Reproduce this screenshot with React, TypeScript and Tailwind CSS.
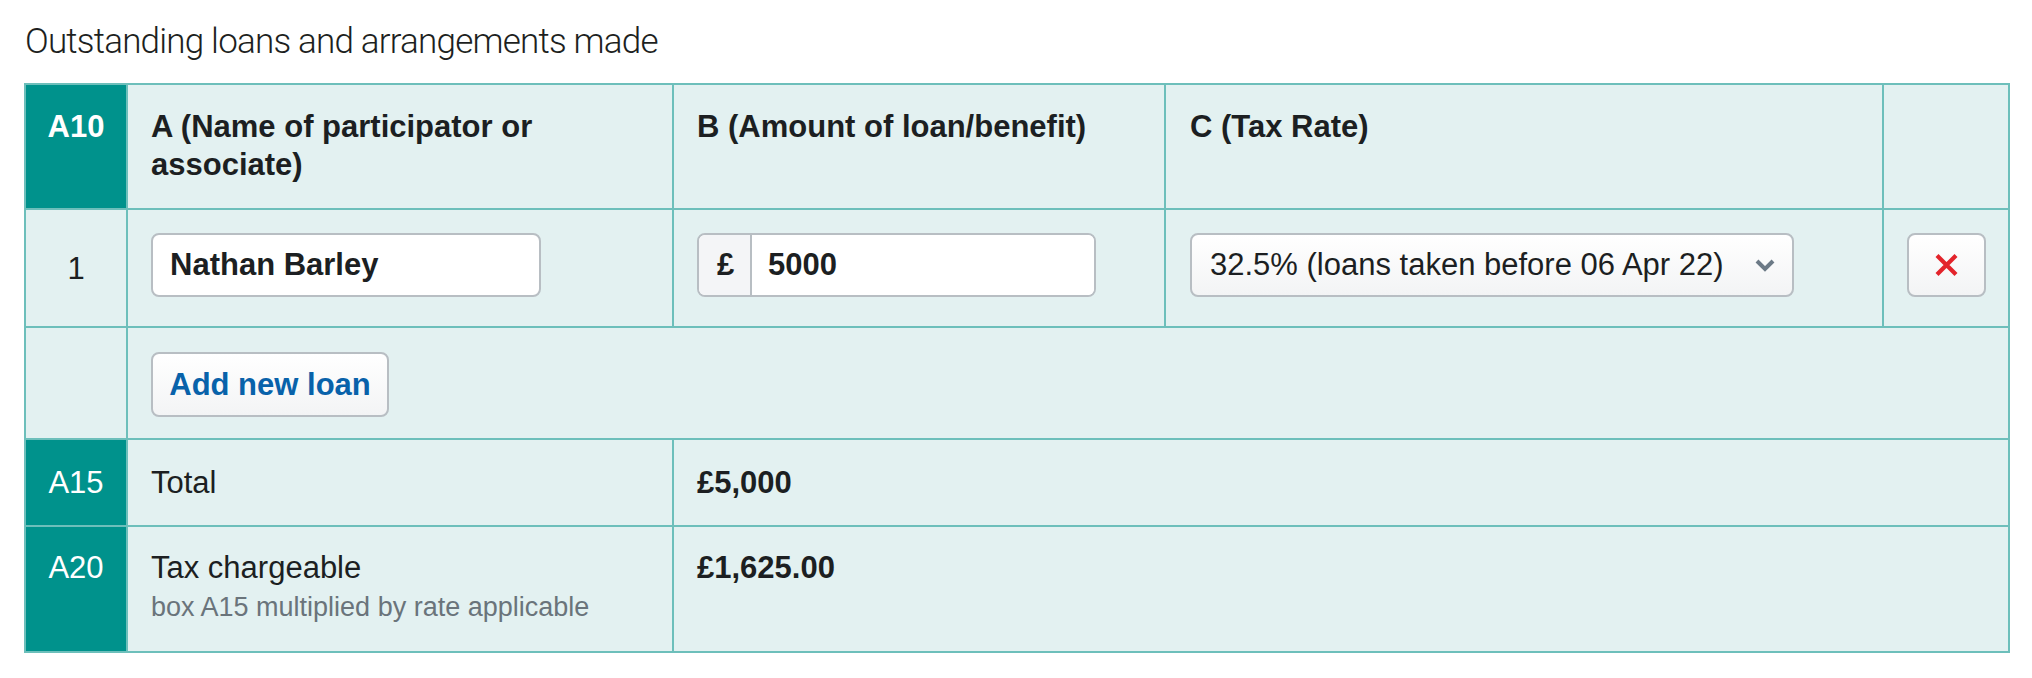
import React from "react";

const SANS = "font-['Liberation_Sans','Arial',sans-serif]";

function XIcon() {
  return (
    <svg width="23" height="22" viewBox="0 0 23 22" fill="none">
      <path d="M2 1.5 L21 20.5 M21 1.5 L2 20.5" stroke="#e3242b" strokeWidth="4.2" strokeLinecap="butt" />
    </svg>
  );
}

function Chevron() {
  return (
    <svg width="20" height="13" viewBox="0 0 20 13" fill="none">
      <path d="M2 2 L10 10 L18 2" stroke="#6c7a86" strokeWidth="4" strokeLinecap="butt" strokeLinejoin="miter" />
    </svg>
  );
}

export default function App() {
  const cell = "bg-[#e3f1f1]";
  const teal = "bg-[#00928c] text-white";
  return (
    <div className={`w-[2032px] h-[678px] bg-white ${SANS} text-[#1c1f22]`}>
      <div className="pl-[25px] pt-[20px] h-[83px]">
        <h2 className="font-['Roboto','Liberation_Sans',sans-serif] font-light text-[35px] leading-[44px] text-[#1d1f21] tracking-[-0.8px]">
          Outstanding loans and arrangements made
        </h2>
      </div>
      <div className="ml-[24px] w-[1986px] bg-[#6dbfbb] p-[2px] grid grid-cols-[100px_544px_490px_716px_124px] gap-[2px] text-[31px] leading-[38px]">
        {/* header */}
        <div className={`${teal} h-[123px] pt-[23px] text-center font-bold`}>A10</div>
        <div className={`${cell} pt-[23px] pl-[23px] pr-[60px] font-bold`}>A (Name of participator or associate)</div>
        <div className={`${cell} pt-[23px] pl-[23px] font-bold`}>B (Amount of loan/benefit)</div>
        <div className={`${cell} pt-[23px] pl-[24px] font-bold`}>C (Tax Rate)</div>
        <div className={cell}></div>

        {/* row 1 */}
        <div className={`${cell} h-[116px] flex items-center justify-center pt-[1px]`}>1</div>
        <div className={`${cell} pt-[23px] pl-[23px]`}>
          <input
            readOnly
            defaultValue="Nathan Barley"
            className={`w-[390px] h-[64px] rounded-[8px] border-2 border-[#b8bec3] bg-white pl-[17px] font-bold text-[31px] text-[#1c1f22] outline-none ${SANS}`}
          />
        </div>
        <div className={`${cell} pt-[23px] pl-[23px]`}>
          <div className="w-[399px] h-[64px] rounded-[8px] border-2 border-[#b8bec3] bg-white flex overflow-hidden">
            <div className="w-[53px] h-full bg-[#f4f5f7] border-r-2 border-[#b8bec3] flex items-center justify-center font-bold pl-[2px]">£</div>
            <input
              readOnly
              defaultValue="5000"
              className={`flex-1 min-w-0 h-full bg-white pl-[16px] font-bold text-[31px] text-[#1c1f22] outline-none ${SANS}`}
            />
          </div>
        </div>
        <div className={`${cell} pt-[23px] pl-[24px]`}>
          <div className="relative w-[604px] h-[64px] rounded-[8px] border-2 border-[#b8bec3] bg-gradient-to-b from-white to-[#f3f4f5] flex items-center pl-[18px]">
            <span>32.5% (loans taken before 06 Apr 22)</span>
            <span className="absolute right-[17px] top-[24px] flex">
              <Chevron />
            </span>
          </div>
        </div>
        <div className={`${cell} pt-[23px] pl-[23px]`}>
          <button className="w-[79px] h-[64px] rounded-[8px] border-2 border-[#b8bec3] bg-gradient-to-b from-white to-[#f3f4f5] flex items-center justify-center">
            <XIcon />
          </button>
        </div>

        {/* add row */}
        <div className={`${cell} h-[110px]`}></div>
        <div className={`${cell} col-span-4 pt-[24px] pl-[23px]`}>
          <button className="w-[238px] h-[65px] rounded-[8px] border-2 border-[#b8bec3] bg-gradient-to-b from-white to-[#f3f4f5] flex items-center justify-center font-bold text-[#0862aa] text-[31px]">
            Add new loan
          </button>
        </div>

        {/* A15 */}
        <div className={`${teal} h-[85px] flex items-center justify-center`}>A15</div>
        <div className={`${cell} flex items-center pl-[23px]`}>Total</div>
        <div className={`${cell} col-span-3 flex items-center pl-[23px] font-bold`}>£5,000</div>

        {/* A20 */}
        <div className={`${teal} h-[124px] pt-[22px] text-center`}>A20</div>
        <div className={`${cell} pt-[22px] pl-[23px]`}>
          <div>Tax chargeable</div>
          <div className="mt-[3px] text-[27px] leading-[34px] text-[#6a747b]">box A15 multiplied by rate applicable</div>
        </div>
        <div className={`${cell} col-span-3 pt-[22px] pl-[23px] font-bold`}>£1,625.00</div>
      </div>
    </div>
  );
}
